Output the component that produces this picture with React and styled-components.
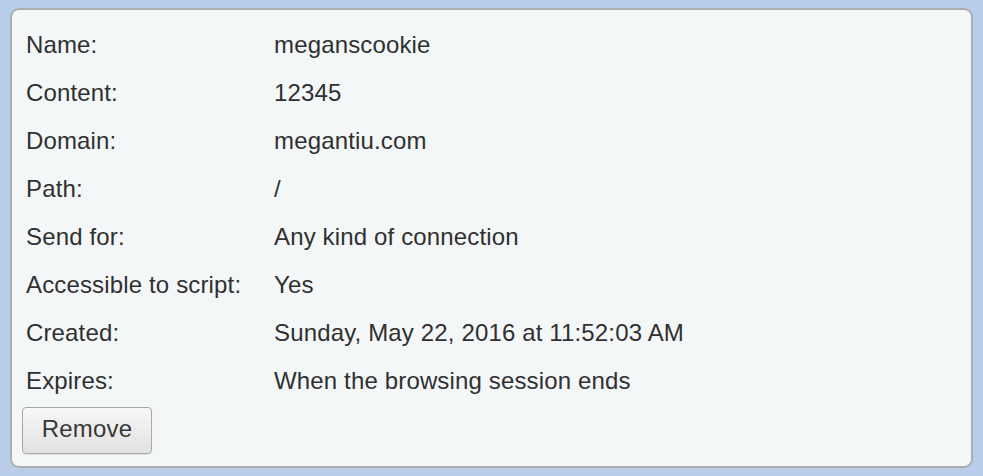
import React from "react";
import styled, { createGlobalStyle } from "styled-components";

const Global = createGlobalStyle`
  html, body { margin: 0; padding: 0; }
  body {
    background: #b8cde9;
    width: 983px;
    height: 476px;
    overflow: hidden;
    font-family: "Liberation Sans", Arial, sans-serif;
  }
`;

const Page = styled.div`
  padding: 8px 10px 0 10px;
  box-sizing: border-box;
  width: 983px;
`;

const Panel = styled.div`
  width: 963px;
  height: 460px;
  box-sizing: border-box;
  background: #f4f7f8;
  border: 2px solid #adadad;
  border-radius: 9px;
  padding: 11px 0 0 14px;
  display: flex;
  flex-direction: column;
`;

const Grid = styled.div`
  display: grid;
  grid-template-columns: 248px 1fr;
  grid-auto-rows: 48px;
  align-items: center;
`;

const Label = styled.div`
  font-size: 24px;
  letter-spacing: 0.15px;
  color: #303030;
  line-height: 28px;
`;

const Value = styled.div`
  font-size: 24px;
  letter-spacing: 0.15px;
  color: #303030;
  line-height: 28px;
`;

const Button = styled.button`
  margin-top: 2px;
  margin-left: -4px;
  width: 130px;
  height: 47px;
  box-sizing: border-box;
  border: 1px solid #a9a9a9;
  border-radius: 4px;
  background: linear-gradient(#f7f7f7, #e2e2e2);
  box-shadow: 0 1px 1px rgba(0,0,0,0.08);
  font-family: "Liberation Sans", Arial, sans-serif;
  font-size: 24px;
  letter-spacing: 0.15px;
  color: #383838;
  padding: 0 0 3px 0;
`;

const rows = [
  ["Name:", "meganscookie"],
  ["Content:", "12345"],
  ["Domain:", "megantiu.com"],
  ["Path:", "/"],
  ["Send for:", "Any kind of connection"],
  ["Accessible to script:", "Yes"],
  ["Created:", "Sunday, May 22, 2016 at 11:52:03 AM"],
  ["Expires:", "When the browsing session ends"],
];

export default function App() {
  return (
    <Page>
      <Global />
      <Panel>
        <Grid>
          {rows.map(([l, v]) => (
            <React.Fragment key={l}>
              <Label>{l}</Label>
              <Value>{v}</Value>
            </React.Fragment>
          ))}
        </Grid>
        <div>
          <Button>Remove</Button>
        </div>
      </Panel>
    </Page>
  );
}
